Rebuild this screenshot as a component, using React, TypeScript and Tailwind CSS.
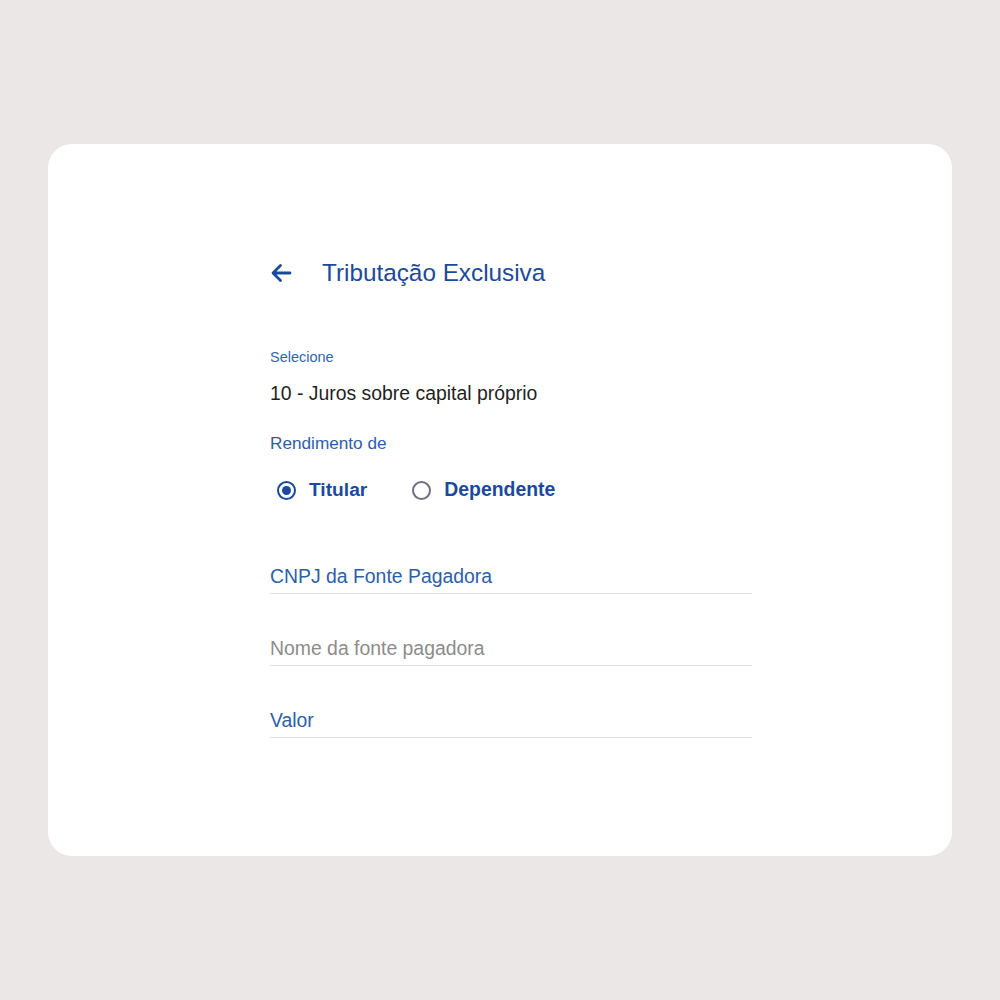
import React from "react";

export default function App() {
  const font = { fontFamily: '"Liberation Sans", Arial, sans-serif' };
  return (
    <div className="w-[1000px] h-[1000px] bg-[#ebe7e6] pt-[144px] px-[48px]" style={font}>
      <div className="h-[712px] bg-white rounded-[24px] pt-[114px] pl-[222px]">
        <div className="w-[482px] flex flex-col">
          <div className="flex items-center h-[30px]">
            <svg width="24" height="24" viewBox="0 0 24 24" className="ml-[-1px]">
              <path d="M21 12H4.5M11.5 4.5L4 12L11.5 19.5" fill="none" stroke="#1b4a9c" strokeWidth="2.8" strokeLinecap="round" strokeLinejoin="round" />
            </svg>
            <span className="ml-[29px] text-[24.3px] leading-[30px] text-[#1b4a9c]">Tributação Exclusiva</span>
          </div>
          <div className="mt-[61px] text-[14.5px] leading-[16px] text-[#3266b1]">Selecione</div>
          <div className="mt-[17px] text-[19.4px] leading-[22px] text-[#1f1f1f]">10 - Juros sobre capital próprio</div>
          <div className="mt-[29px] text-[17.2px] leading-[20px] text-[#2e5ea9]">Rendimento de</div>
          <div className="mt-[25px] flex items-center h-[24px]">
            <div className="ml-[7px] w-[19px] h-[19px] rounded-full border-2 border-[#1b4a9c] flex items-center justify-center">
              <div className="w-[9px] h-[9px] rounded-full bg-[#1b4a9c]" />
            </div>
            <span className="ml-[13px] text-[19.2px] font-bold text-[#1b4a9c]">Titular</span>
            <div className="ml-[45px] w-[19px] h-[19px] rounded-full border-2 border-[#6f6f7f]" />
            <span className="ml-[13px] text-[19.4px] font-bold text-[#1b4a9c]">Dependente</span>
          </div>
          <div className="mt-[63px] pb-[6px] border-b border-[#e3e3e3] text-[19.4px] leading-[22px] text-[#2e5ea9]">CNPJ da Fonte Pagadora</div>
          <div className="mt-[43px] pb-[6px] border-b border-[#e3e3e3] text-[19.4px] leading-[22px] text-[#8c8c8c]">Nome da fonte pagadora</div>
          <div className="mt-[43px] pb-[6px] border-b border-[#e3e3e3] text-[19.4px] leading-[22px] text-[#2e5ea9]">Valor</div>
        </div>
      </div>
    </div>
  );
}
